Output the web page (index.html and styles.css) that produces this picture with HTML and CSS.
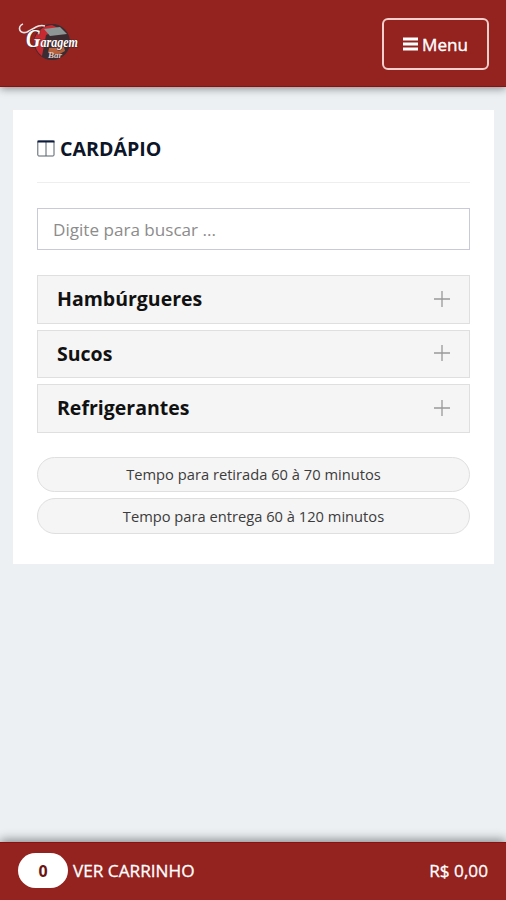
FILE: index.html
```html
<!DOCTYPE html>
<html lang="pt-BR">
<head>
  <meta charset="UTF-8">
  <title>Cardápio</title>
  <meta name="viewport" content="width=device-width, initial-scale=1.0">
  <link rel="stylesheet" href="styles.css">
</head>
<body>

  <header class="header">
    <a href="#" class="logo">
      <svg width="70" height="48" viewBox="0 0 70 48">
        <circle cx="34" cy="22" r="18" fill="#3a2c31"/>
        <path d="M16 20 Q21 6 34 5 L42 9 L28 15 L24 36 Q17 31 16 20Z" fill="#c92a32"/>
        <path d="M26 9 L42 7 L49 14 L32 16Z" fill="#8f9696"/>
        <path d="M31 28 L46 27 L47 31 L40 35 L30 33Z" fill="#b5603d"/>
        <path d="M5 4 C-1 6 1 15 9 12 C16 9 20 4 27 6" fill="none" stroke="#eee5e5" stroke-width="1.6"/>
        <text x="8" y="27" class="logo-name" textLength="52" lengthAdjust="spacingAndGlyphs"><tspan class="logo-initial">G</tspan>aragem</text>
        <text x="30" y="38" class="logo-sub">Bar</text>
      </svg>
    </a>
    <button type="button" class="menu-btn">
      <svg width="15" height="14" viewBox="0 0 15 14">
        <path d="M0 2h15M0 7h15M0 12h15" stroke="#fff" stroke-width="2.8"/>
      </svg>
      <span>Menu</span>
    </button>
  </header>

  <main class="card">
    <h1 class="card-title">
      <svg width="18" height="17" viewBox="0 0 18 17" fill="none">
        <rect x="0.8" y="1" width="16.2" height="15" rx="1" stroke="#56606c"/>
        <path d="M9 2v14" stroke="#56606c"/>
        <path d="M0.5 1.5h17" stroke="#0d1c3c" stroke-width="2"/>
      </svg>
      <span>CARDÁPIO</span>
    </h1>

    <input type="text" class="search" placeholder="Digite para buscar ...">

    <div class="categories">
      <div class="category">
        <span>Hambúrgueres</span>
        <svg width="16" height="16" viewBox="0 0 16 16"><path d="M0 8h16M8 0v16" stroke="#999" stroke-width="1.3"/></svg>
      </div>
      <div class="category">
        <span>Sucos</span>
        <svg width="16" height="16" viewBox="0 0 16 16"><path d="M0 8h16M8 0v16" stroke="#999" stroke-width="1.3"/></svg>
      </div>
      <div class="category">
        <span>Refrigerantes</span>
        <svg width="16" height="16" viewBox="0 0 16 16"><path d="M0 8h16M8 0v16" stroke="#999" stroke-width="1.3"/></svg>
      </div>
    </div>

    <div class="times">
      <div class="time">Tempo para retirada 60 à 70 minutos</div>
      <div class="time">Tempo para entrega 60 à 120 minutos</div>
    </div>
  </main>

  <footer class="cart-bar">
    <span class="cart-count">0</span>
    <span class="cart-label">VER CARRINHO</span>
    <span class="cart-total">R$ 0,00</span>
  </footer>

</body>
</html>
```
FILE: styles.css
```css
* {
  box-sizing: border-box;
}

body {
  margin: 0;
  min-height: 100vh;
  display: flex;
  flex-direction: column;
  background: #ecf0f3;
  font-family: 'Open Sans', sans-serif;
  color: #111;
}

.header {
  height: 87px;
  padding: 2px 17px 0 18px;
  display: flex;
  justify-content: space-between;
  align-items: center;
  background: #94221e;
  border-bottom: 1px solid #8b1010;
  box-shadow: 0 2px 8px rgba(0, 0, 0, 0.4);
}

.logo svg {
  display: block;
  overflow: visible;
}

.logo-name {
  font: italic bold 15px 'Liberation Serif', serif;
  fill: #fff;
  stroke: #4a2226;
  stroke-width: 1px;
  paint-order: stroke;
}

.logo-initial {
  font-size: 25px;
}

.logo-sub {
  font: italic bold 9px 'Liberation Serif', serif;
  fill: #dfc9c9;
}

.menu-btn {
  width: 107px;
  height: 52px;
  padding: 0;
  display: flex;
  justify-content: center;
  align-items: center;
  gap: 4px;
  background: transparent;
  border: 2px solid #f0cfcc;
  border-radius: 6px;
  color: #fff;
  font: 17.1px 'Open Sans', sans-serif;
  -webkit-text-stroke: 0.4px #fff;
}

.card {
  margin: 23px 12px 0 13px;
  height: 454px;
  padding: 24px 24px 0;
  background: #fff;
}

.card-title {
  margin: 0 0 25px;
  height: 49px;
  padding-bottom: 20px;
  display: flex;
  align-items: center;
  gap: 5px;
  border-bottom: 1px solid #eee;
  color: #0d1528;
  font-size: 19.6px;
  font-weight: 700;
}

.search {
  display: block;
  width: 100%;
  height: 42px;
  padding: 0 15px;
  border: 1px solid #c9c9da;
  border-radius: 0;
  font: 17.1px 'Open Sans', sans-serif;
}

.search::placeholder {
  color: #8c8c8c;
}

.categories {
  margin-top: 25px;
  display: grid;
  gap: 6px;
}

.category {
  height: 48.5px;
  padding: 0 19px 1px 19px;
  display: flex;
  justify-content: space-between;
  align-items: center;
  background: #f5f5f5;
  border: 1px solid #dfdfdf;
  font-size: 19.5px;
  font-weight: 700;
}

.times {
  margin-top: 24px;
  display: grid;
  gap: 6px;
}

.time {
  height: 35.5px;
  display: flex;
  justify-content: center;
  align-items: center;
  background: #f5f5f5;
  border: 1px solid #dfdfdf;
  border-radius: 18px;
  color: #3c3c3c;
  font-size: 14.7px;
}

.cart-bar {
  margin-top: auto;
  height: 58px;
  padding: 0 18px 2px;
  display: flex;
  align-items: center;
  background: #94221e;
  border-top: 1px solid #8b1010;
  box-shadow: 0 -2px 10px rgba(0, 0, 0, 0.45);
  color: #fff;
  font-size: 17.2px;
  -webkit-text-stroke: 0.3px #fff;
}

.cart-count {
  width: 50px;
  height: 35px;
  margin-right: 5px;
  display: flex;
  justify-content: center;
  align-items: center;
  background: #fff;
  border-radius: 18px;
  color: #6b1414;
  font-size: 16px;
  font-weight: 700;
  -webkit-text-stroke: 0;
}

.cart-total {
  margin-left: auto;
}
```
